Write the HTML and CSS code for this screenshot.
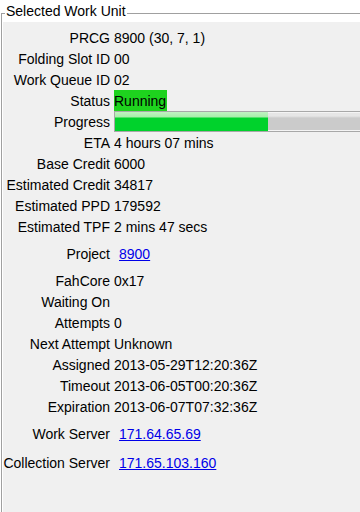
FILE: index.html
```html
<!DOCTYPE html>
<html lang="en">
<head>
  <meta charset="UTF-8">
  <meta name="viewport" content="width=device-width, initial-scale=1.0">
  <title>Selected Work Unit</title>
  <link rel="stylesheet" href="styles.css">
</head>
<body>
<fieldset class="group">
  <legend>Selected Work Unit</legend>
  <div class="panel">
    <div class="row"><span class="label">PRCG</span><span class="value">8900 (30, 7, 1)</span></div>
    <div class="row"><span class="label">Folding Slot ID</span><span class="value">00</span></div>
    <div class="row"><span class="label">Work Queue ID</span><span class="value">02</span></div>
    <div class="row"><span class="label">Status</span><span class="value"><span class="status">Running</span></span></div>
    <div class="row">
      <span class="label">Progress</span>
      <span class="value"><span class="progress"><span class="progress-fill" style="width: 51%"></span></span></span>
    </div>
    <div class="row"><span class="label">ETA</span><span class="value">4 hours 07 mins</span></div>
    <div class="row"><span class="label">Base Credit</span><span class="value">6000</span></div>
    <div class="row"><span class="label">Estimated Credit</span><span class="value">34817</span></div>
    <div class="row"><span class="label">Estimated PPD</span><span class="value">179592</span></div>
    <div class="row"><span class="label">Estimated TPF</span><span class="value">2 mins 47 secs</span></div>
    <div class="row tall"><span class="label">Project</span><span class="value"><a href="#">8900</a></span></div>
    <div class="row"><span class="label">FahCore</span><span class="value">0x17</span></div>
    <div class="row"><span class="label">Waiting On</span><span class="value"></span></div>
    <div class="row"><span class="label">Attempts</span><span class="value">0</span></div>
    <div class="row"><span class="label">Next Attempt</span><span class="value">Unknown</span></div>
    <div class="row"><span class="label">Assigned</span><span class="value">2013-05-29T12:20:36Z</span></div>
    <div class="row"><span class="label">Timeout</span><span class="value">2013-06-05T00:20:36Z</span></div>
    <div class="row"><span class="label">Expiration</span><span class="value">2013-06-07T07:32:36Z</span></div>
    <div class="row tall"><span class="label">Work Server</span><span class="value"><a href="#">171.64.65.69</a></span></div>
    <div class="row last"><span class="label">Collection Server</span><span class="value"><a href="#">171.65.103.160</a></span></div>
  </div>
</fieldset>
</body>
</html>
```
FILE: styles.css
```css
html, body {
  margin: 0;
  background: #fff;
  overflow: hidden;
}
body {
  font-family: "Liberation Sans", Arial, sans-serif;
  font-size: 14px;
  color: #000;
}
.group {
  margin: 0 0 0 1px;
  padding: 0;
  border: none;
  border-top: 1px solid #a0a0a0;
  border-left: 1px solid #a0a0a0;
  min-width: 0;
}
.group legend {
  margin-left: 3px;
  padding: 0 1px 4px 1px;
  line-height: 22px;
}
.panel {
  margin-top: -4px;
  padding-top: 5px;
  background: #f0f0f0;
  border-left: 1px solid #fff;
  height: 485px;
}
.row {
  display: grid;
  grid-template-columns: 107px 1fr;
  column-gap: 4px;
  height: 21px;
  align-items: center;
  white-space: nowrap;
}
.row.tall {
  height: 33px;
}
.row.last {
  height: 23px;
  padding-top: 2px;
  box-sizing: border-box;
}
.label {
  text-align: right;
}
.value {
  height: 100%;
  display: flex;
  align-items: center;
  overflow: hidden;
}
.value a {
  margin-left: 5px;
  color: #0000e8;
  text-decoration: underline;
}
.status {
  background: #1ed31e;
  height: 100%;
  display: flex;
  align-items: center;
  padding-right: 1px;
}
.progress {
  display: block;
  width: 300px;
  height: 19px;
  border: 1px solid #a8a8a8;
  background: linear-gradient(#e6e6e6 0, #e6e6e6 4px, #cbcbcb 6px);
  box-shadow: inset 0 0 0 1px #f4f4f4;
  flex: none;
}
.progress-fill {
  display: block;
  height: 100%;
  background: linear-gradient(#c0f2c2 0, #a8eeaa 5px, #00d22c 6px, #00d22c 100%);
}
```
